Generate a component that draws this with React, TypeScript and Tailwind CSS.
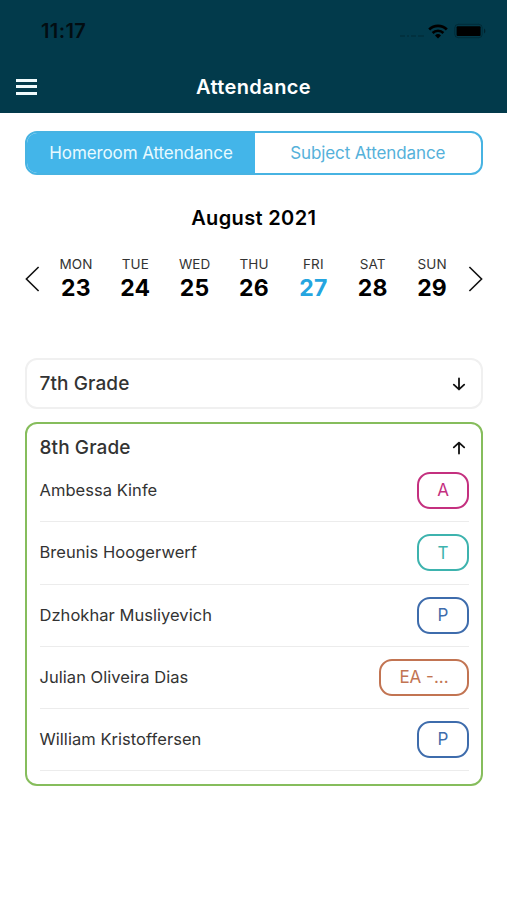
const days = [
    { label: "MON", date: 23 },
    { label: "TUE", date: 24 },
    { label: "WED", date: 25 },
    { label: "THU", date: 26 },
    { label: "FRI", date: 27 },
    { label: "SAT", date: 28 },
    { label: "SUN", date: 29 },
];

const students = [
    { name: "Ambessa Kinfe", status: "A", badge: "w-[52px] border-[#c4307f] text-[#c4307f]" },
    { name: "Breunis Hoogerwerf", status: "T", badge: "w-[52px] border-[#3db3ae] text-[#3db3ae]" },
    { name: "Dzhokhar Musliyevich", status: "P", badge: "w-[52px] border-[#3e6cac] text-[#3e6cac]" },
    { name: "Julian Oliveira Dias", status: "EA -...", badge: "w-[90px] border-[#c27452] text-[#c27452]" },
    { name: "William Kristoffersen", status: "P", badge: "w-[52px] border-[#3e6cac] text-[#3e6cac]" },
];

const StatusBar = () => (
    <div className="flex h-[62px] items-center justify-between pl-[41px] pr-[21px] text-[#020d12]">
        <span className="text-[20px] font-semibold leading-6 tracking-[0.4px]">11:17</span>
        <div className="flex items-center">
            <svg width="26" height="4" viewBox="0 0 26 4" className="mr-[3px] mt-[9px] opacity-20">
                <path d="M1 2h5M8 2h2M12 2h5M19 2h6" stroke="black" strokeWidth="1.3" />
            </svg>
            <svg width="20" height="15" viewBox="0 0 20 15" fill="none" stroke="black">
                <path d="M1.2 5.5a12.6 12.6 0 0 1 17.6 0" strokeWidth="2.8" />
                <path d="M4.6 9a7.7 7.7 0 0 1 10.8 0" strokeWidth="2.6" />
                <path d="M10 14.5 7 11.5a4.3 4.3 0 0 1 6 0Z" fill="black" stroke="none" />
            </svg>
            <svg width="32" height="16" viewBox="0 0 32 16" className="ml-[6px]">
                <rect x="0.8" y="1.3" width="27.4" height="13.4" rx="3.5" fill="none" stroke="black" strokeOpacity="0.25" />
                <rect x="2.6" y="3.3" width="24" height="9.6" rx="1" fill="black" />
                <path d="M30 5.5c1.8.8 1.8 4.2 0 5z" fill="black" fillOpacity="0.4" />
            </svg>
        </div>
    </div>
);

const GradeArrow = ({ up = false }: { up?: boolean }) => (
    <svg
        width="14"
        height="14"
        viewBox="0 0 14 14"
        fill="none"
        stroke="#111"
        strokeWidth="1.8"
        strokeLinecap="round"
        strokeLinejoin="round"
        className={up ? "mr-[3px] rotate-180" : "mr-[3px]"}
    >
        <path d="M7 1.4v11M1.8 7.6 7 12.4l5.2-4.8" />
    </svg>
);

const Chevron = ({ right = false }: { right?: boolean }) => (
    <svg
        width="15"
        height="26"
        viewBox="0 0 15 26"
        fill="none"
        stroke="#111"
        strokeWidth="1.6"
        className={right ? "mb-[2px] rotate-180" : "mb-[2px]"}
    >
        <path d="M13.6 1 1.4 13l12.2 12" />
    </svg>
);

const App = () => {
    return (
        <div className="min-h-screen bg-white font-['Inter','Liberation_Sans',sans-serif] text-[#333]">
            <header className="h-[113px] bg-[#023a4b] text-white">
                <StatusBar />
                <div className="grid h-[49px] grid-cols-[1fr_auto_1fr] items-center px-[15.5px]">
                    <button aria-label="Menu" className="flex w-[21px] flex-col gap-[3.5px]">
                        <span className="h-[3px] bg-[#effafc]" />
                        <span className="h-[3px] bg-[#effafc]" />
                        <span className="h-[3px] bg-[#effafc]" />
                    </button>
                    <h1 className="text-[20px] font-semibold tracking-[0.4px]">Attendance</h1>
                </div>
            </header>

            <main className="pl-[25px] pr-[24.5px] pt-[18px]">
                <div className="flex h-[43.5px] overflow-hidden rounded-[12px] border-2 border-[#47b3e2] text-[17px] tracking-[-0.1px]">
                    <button className="w-[228px] bg-[#43b5e9] pt-[2px] text-[#e8faff]">Homeroom Attendance</button>
                    <button className="flex-1 pt-[2px] text-[#55b1da]">Subject Attendance</button>
                </div>

                <h2 className="mt-[29px] text-center text-[20px] font-semibold leading-[28px] tracking-[0.35px] text-black">
                    August 2021
                </h2>

                <div className="mt-[21px] flex h-[54px] items-center">
                    <Chevron />
                    <div className="mx-[6px] grid flex-1 grid-cols-7">
                        {days.map((day) => (
                            <div key={day.date} className="-mt-[3px] flex flex-col items-center pl-[0.5px]">
                                <span className="text-[13.5px] leading-[20px] tracking-[0.1px]">{day.label}</span>
                                <span
                                    className={`mt-px text-[23px] font-bold leading-[27px] tracking-[0.2px] ${
                                        day.date === 27 ? "text-[#25a5e0]" : "text-black"
                                    }`}
                                >
                                    {day.date}
                                </span>
                            </div>
                        ))}
                    </div>
                    <Chevron right />
                </div>

                <section className="mt-[51.5px] flex h-[51px] items-center justify-between rounded-[12px] border-2 border-[#f0f0f0] pl-[12.5px] pr-[11.5px]">
                    <h3 className="pt-px text-[19px] font-medium tracking-[0.1px]">7th Grade</h3>
                    <GradeArrow />
                </section>

                <section className="mt-[13px] h-[364px] rounded-[12px] border-2 border-[#86bd5c] pl-[12.5px] pr-[11.5px] pt-[11px]">
                    <div className="flex h-[26px] items-center justify-between">
                        <h3 className="pt-px text-[19px] font-medium tracking-[0.1px]">8th Grade</h3>
                        <GradeArrow up />
                    </div>
                    <ul className="-mt-px">
                        {students.map((student) => (
                            <li
                                key={student.name}
                                className="flex h-[62.3px] items-start justify-between border-b border-[#ececec] pt-[12px]"
                            >
                                <span className="mt-[5px] text-[16.5px] leading-[26px] tracking-[0.04px]">{student.name}</span>
                                <span
                                    className={`flex h-[37px] items-center justify-center rounded-[13px] border-2 pt-px text-[17px] ${student.badge}`}
                                >
                                    {student.status}
                                </span>
                            </li>
                        ))}
                    </ul>
                </section>
            </main>
        </div>
    );
};

export default App;
